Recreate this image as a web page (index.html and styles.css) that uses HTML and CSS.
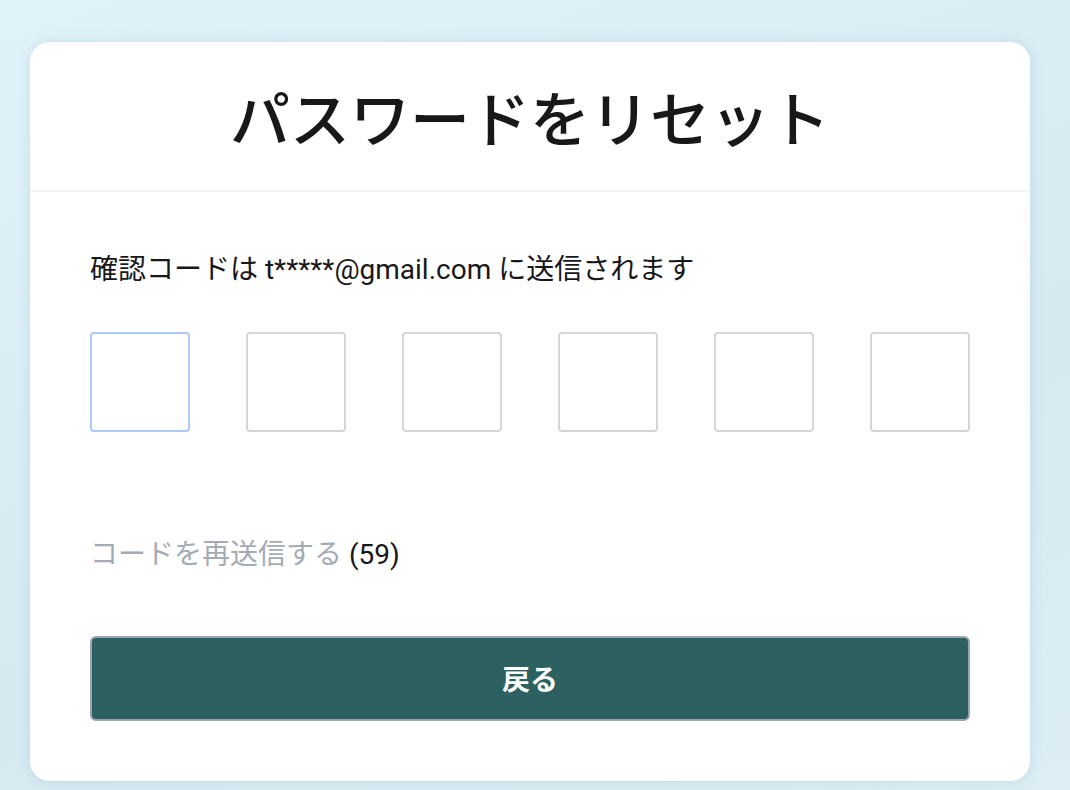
FILE: index.html
```html
<!DOCTYPE html>
<html lang="ja">

<head>
    <meta charset="UTF-8">
    <title>パスワードをリセット</title>
    <link rel="stylesheet" href="styles.css">
</head>

<body>
    <div class="card">
        <div class="card_head">
            <h1 class="title">パスワードをリセット</h1>
        </div>
        <div class="card_body">
            <p class="notice">確認コードは t*****@gmail.com に送信されます</p>
            <div class="code_row">
                <input type="text" maxlength="1" class="code_box focus">
                <input type="text" maxlength="1" class="code_box">
                <input type="text" maxlength="1" class="code_box">
                <input type="text" maxlength="1" class="code_box">
                <input type="text" maxlength="1" class="code_box">
                <input type="text" maxlength="1" class="code_box">
            </div>
            <p class="resend"><span class="resend_link">コードを再送信する</span> (<span id="timer">59</span>)</p>
            <button type="button" class="back_btn">戻る</button>
        </div>
    </div>
</body>

</html>
```

FILE: styles.css
```css
* {
    box-sizing: border-box;
}

body {
    margin: 0;
    padding: 42px 40px 0 30px;
    min-height: 100vh;
    background: linear-gradient(160deg, #e0f2f9 0%, #d5e9f1 60%, #dcedf4 100%);
    font-family: Roboto, "Noto Sans CJK JP", sans-serif;
    color: #18181b;
}

.card {
    width: 1000px;
    background-color: #fff;
    border-radius: 20px;
    box-shadow: 0 0 12px rgba(120, 170, 190, 0.25);
}

.card_head {
    padding: 26px 0;
    border-bottom: 2px solid #f3f4f6;
    text-align: center;
}

.title {
    margin: 0;
    font-family: "Noto Sans CJK JP", sans-serif;
    font-size: 60px;
    font-weight: 500;
    line-height: 96px;
}

.card_body {
    padding: 58px 60px 60px 60px;
}

.notice {
    margin: 0;
    font-size: 28px;
    line-height: 40px;
}

.code_row {
    display: flex;
    justify-content: space-between;
    margin-top: 42px;
}

.code_box {
    width: 100px;
    height: 100px;
    border: 2px solid #d4d6db;
    border-radius: 4px;
    outline: none;
    text-align: center;
    font-size: 40px;
}

.code_box.focus {
    border-color: #abcafa;
}

.resend {
    margin: 103px 0 0;
    font-size: 28px;
    line-height: 40px;
}

.resend_link {
    color: #a3abb5;
}

.back_btn {
    display: block;
    width: 100%;
    height: 85px;
    margin-top: 61px;
    padding-bottom: 3px;
    border: 2px solid #9ca4ae;
    border-radius: 6px;
    background-color: #2d6060;
    color: #fff;
    font-family: "Noto Sans CJK JP", sans-serif;
    font-size: 28px;
    font-weight: bold;
    cursor: pointer;
}
```
